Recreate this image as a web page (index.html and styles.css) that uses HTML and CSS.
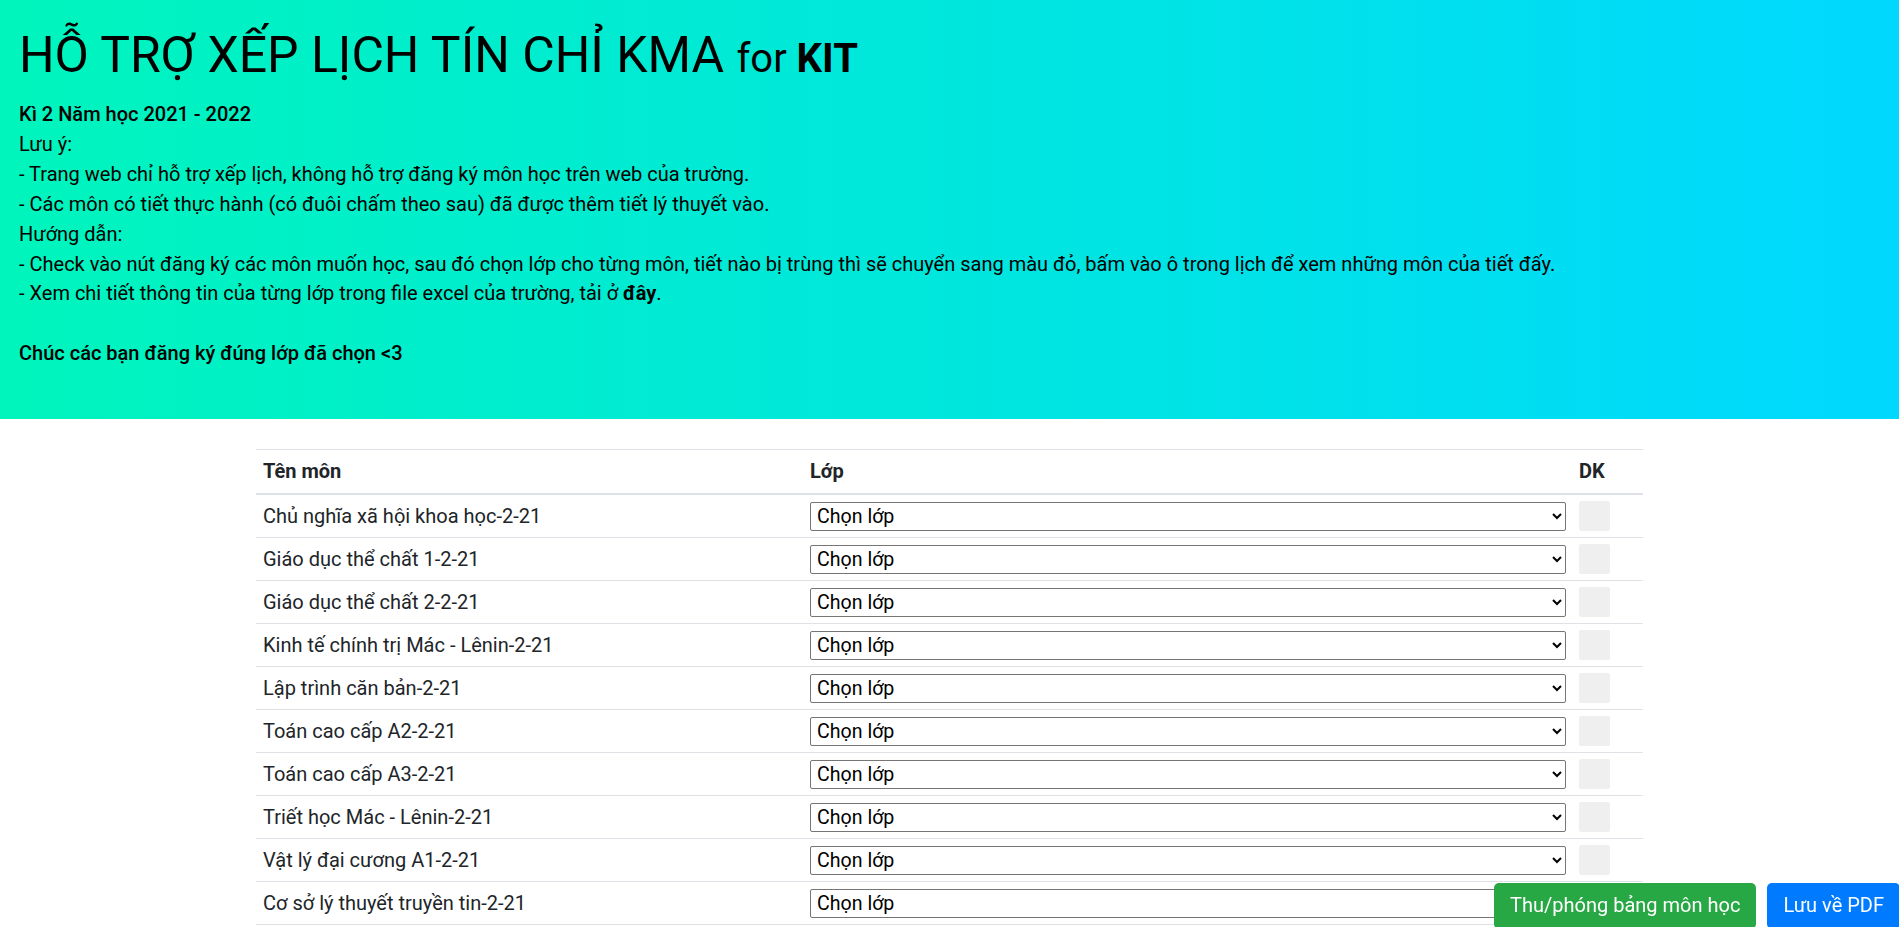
FILE: index.html
```html
<!DOCTYPE html>
<html lang="vi">
<head>
<meta charset="utf-8">
<title>Hỗ trợ xếp lịch tín chỉ KMA</title>
<link rel="stylesheet" href="styles.css">
</head>
<body>
<header class="hero">
  <h1 class="hero-title">HỖ TRỢ XẾP LỊCH TÍN CHỈ KMA <span class="hero-for">for <b>KIT</b></span></h1>
  <div class="hero-text">
    <div class="strong">Kì 2 Năm học 2021 - 2022</div>
    <div>Lưu ý:</div>
    <div>- Trang web chỉ hỗ trợ xếp lịch, không hỗ trợ đăng ký môn học trên web của trường.</div>
    <div>- Các môn có tiết thực hành (có đuôi chấm theo sau) đã được thêm tiết lý thuyết vào.</div>
    <div>Hướng dẫn:</div>
    <div>- Check vào nút đăng ký các môn muốn học, sau đó chọn lớp cho từng môn, tiết nào bị trùng thì sẽ chuyển sang màu đỏ, bấm vào ô trong lịch để xem những môn của tiết đấy.</div>
    <div>- Xem chi tiết thông tin của từng lớp trong file excel của trường, tải ở <a class="link" href="#">đây</a>.</div>
    <br>
    <div class="strong">Chúc các bạn đăng ký đúng lớp đã chọn &lt;3</div>
  </div>
</header>

<main class="content">
  <table class="subjects">
    <colgroup>
      <col class="c-name">
      <col class="c-class">
      <col class="c-dk">
    </colgroup>
    <thead>
      <tr><th>Tên môn</th><th>Lớp</th><th>DK</th></tr>
    </thead>
    <tbody>
      <tr><td>Chủ nghĩa xã hội khoa học-2-21</td><td><select class="pick"><option>Chọn lớp</option></select></td><td><input type="checkbox" class="dk"></td></tr>
      <tr><td>Giáo dục thể chất 1-2-21</td><td><select class="pick"><option>Chọn lớp</option></select></td><td><input type="checkbox" class="dk"></td></tr>
      <tr><td>Giáo dục thể chất 2-2-21</td><td><select class="pick"><option>Chọn lớp</option></select></td><td><input type="checkbox" class="dk"></td></tr>
      <tr><td>Kinh tế chính trị Mác - Lênin-2-21</td><td><select class="pick"><option>Chọn lớp</option></select></td><td><input type="checkbox" class="dk"></td></tr>
      <tr><td>Lập trình căn bản-2-21</td><td><select class="pick"><option>Chọn lớp</option></select></td><td><input type="checkbox" class="dk"></td></tr>
      <tr><td>Toán cao cấp A2-2-21</td><td><select class="pick"><option>Chọn lớp</option></select></td><td><input type="checkbox" class="dk"></td></tr>
      <tr><td>Toán cao cấp A3-2-21</td><td><select class="pick"><option>Chọn lớp</option></select></td><td><input type="checkbox" class="dk"></td></tr>
      <tr><td>Triết học Mác - Lênin-2-21</td><td><select class="pick"><option>Chọn lớp</option></select></td><td><input type="checkbox" class="dk"></td></tr>
      <tr><td>Vật lý đại cương A1-2-21</td><td><select class="pick"><option>Chọn lớp</option></select></td><td><input type="checkbox" class="dk"></td></tr>
      <tr><td>Cơ sở lý thuyết truyền tin-2-21</td><td><select class="pick"><option>Chọn lớp</option></select></td><td><input type="checkbox" class="dk"></td></tr>
      <tr><td>Kỹ thuật lập trình-2-21</td><td><select class="pick"><option>Chọn lớp</option></select></td><td><input type="checkbox" class="dk"></td></tr>
    </tbody>
  </table>
</main>

<div class="actions">
  <button class="btn btn-green" type="button">Thu/phóng bảng môn học</button>
  <button class="btn btn-blue" type="button">Lưu về PDF</button>
</div>
</body>
</html>
```

FILE: styles.css
```css
html, body {
  margin: 0;
  padding: 0;
}
body {
  font-family: Roboto, "Noto Sans", "Liberation Sans", sans-serif;
  font-size: 20px;
  line-height: 29.9px;
  color: #212529;
  background: #fff;
}
.hero {
  background: linear-gradient(to right, #00f5bc, #00d8ff);
  padding: 19px 19px 50px 19px;
  color: #000;
}
.hero-title {
  margin: 6px 0 11px;
  font-size: 49.9px;
  line-height: 60px;
  font-weight: 400;
  letter-spacing: 0;
}
.hero-for {
  font-size: 40px;
}
.hero-for b {
  font-weight: 700;
}
.hero-text .strong {
  font-weight: 500;
}
.link {
  color: #000;
  font-weight: 700;
  text-decoration: none;
}
.content {
  display: flex;
  justify-content: center;
  padding-top: 30px;
}
.subjects {
  width: 1387px;
  border-collapse: collapse;
  table-layout: fixed;
}
.c-name { width: 547px; }
.c-class { width: 769px; }
.c-dk { width: 71px; }
.subjects th {
  text-align: left;
  font-weight: 700;
  padding: 7px 7px;
  line-height: 29px;
  border-top: 1px solid #dee2e6;
  border-bottom: 2px solid #dee2e6;
}
.subjects td {
  padding: 6px 6px 6px 7px;
  border-top: 1px solid #dee2e6;
  vertical-align: middle;
  line-height: 29px;
}
.pick {
  display: block;
  width: 100%;
  height: 29px;
  font-family: Roboto, "Noto Sans", "Liberation Sans", sans-serif;
  font-size: 19.6px;
  color: #000;
  background: #fff;
  border: 1px solid #767676;
  border-radius: 2px;
  padding: 0 2px;
}
.dk {
  display: block;
  appearance: none;
  -webkit-appearance: none;
  margin: 0;
  width: 31px;
  height: 30px;
  background: #efefef;
  border: none;
  border-radius: 2px;
}
.actions {
  position: fixed;
  top: 883px;
  right: -1px;
  display: flex;
  gap: 11px;
}
.btn {
  font-family: Roboto, "Noto Sans", "Liberation Sans", sans-serif;
  font-size: 20px;
  line-height: 29px;
  color: #fff;
  border: none;
  border-radius: 5px;
  padding: 8px 16px 9px;
}
.btn-green { background: #28a745; }
.btn-blue { background: #007bff; }
```
